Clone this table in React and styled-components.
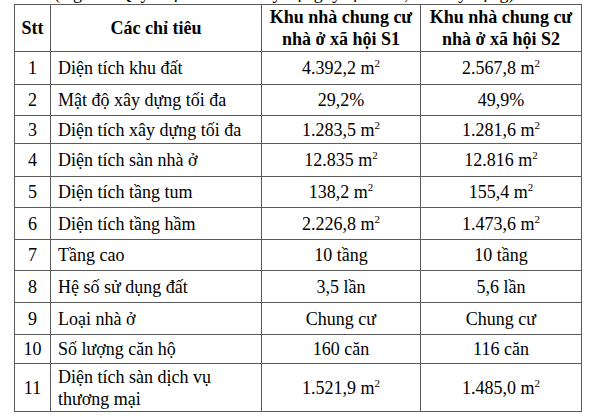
import React from "react";
import styled, { createGlobalStyle } from "styled-components";

const Global = createGlobalStyle`
  html, body { margin: 0; padding: 0; background: #fff; }
  body { font-family: "Liberation Serif", "Times New Roman", serif; color: #000; overflow: hidden; }
`;

const Page = styled.div`
  width: 591px;
  height: 415px;
  overflow: hidden;
  padding-left: 14px;
  box-sizing: border-box;
`;

const Caption = styled.p`
  margin: -17px 0 0 0;
  height: 21px;
  font-size: 18px;
  line-height: 20px;
  padding-left: 40px;
  white-space: nowrap;
`;

const Table = styled.table`
  border-collapse: collapse;
  table-layout: fixed;
  width: 568px;
  font-size: 18px;
`;

const Th = styled.th`
  border: 1px solid #5a5a5a;
  font-weight: bold;
  text-align: center;
  line-height: 22px;
  height: 46px;
  padding: 0 2px;
  vertical-align: middle;
`;

const Td = styled.td`
  border: 1px solid #5a5a5a;
  padding: 0 ${(p) => (p.$left ? "7px" : "2px")};
  text-align: ${(p) => (p.$left ? "left" : "center")};
  vertical-align: middle;
  line-height: 22px;
  white-space: nowrap;
`;

const Tr = styled.tr`
  height: ${(p) => p.$h}px;
`;

const Sup = styled.sup`
  font-size: 11px;
  vertical-align: 7px;
  line-height: 0;
`;

const Footer = styled.p`
  margin: 4px 0 0 0;
  font-size: 18px;
  line-height: 20px;
  padding-left: 60px;
  white-space: nowrap;
`;

const M2 = ({ v }) => (
  <>
    {v} m<Sup>2</Sup>
  </>
);

const rows = [
  ["1", "Diện tích khu đất", <M2 v="4.392,2" />, <M2 v="2.567,8" />, 33],
  ["2", "Mật độ xây dựng tối đa", "29,2%", "49,9%", 31],
  ["3", "Diện tích xây dựng tối đa", <M2 v="1.283,5" />, <M2 v="1.281,6" />, 28],
  ["4", "Diện tích sàn nhà ở", <M2 v="12.835" />, <M2 v="12.816" />, 33],
  ["5", "Diện tích tầng tum", <M2 v="138,2" />, <M2 v="155,4" />, 31],
  ["6", "Diện tích tầng hầm", <M2 v="2.226,8" />, <M2 v="1.473,6" />, 32],
  ["7", "Tầng cao", "10 tầng", "10 tầng", 31],
  ["8", "Hệ số sử dụng đất", "3,5 lần", "5,6 lần", 32],
  ["9", "Loại nhà ở", "Chung cư", "Chung cư", 32],
  ["10", "Số lượng căn hộ", "160 căn", "116 căn", 29],
  ["11", <>Diện tích sàn dịch vụ<br />thương mại</>, <M2 v="1.521,9" />, <M2 v="1.485,0" />, 48],
];

export default function App() {
  return (
    <Page>
      <Global />
      <Caption>(Nguồn: Quy hoạch chi tiết xây dựng tỷ lệ 1/500, Sở Xây dựng)</Caption>
      <Table>
        <colgroup>
          <col style={{ width: "36px" }} />
          <col style={{ width: "211px" }} />
          <col style={{ width: "159px" }} />
          <col style={{ width: "161px" }} />
        </colgroup>
        <thead>
          <tr>
            <Th>Stt</Th>
            <Th>Các chỉ tiêu</Th>
            <Th>Khu nhà chung cư<br />nhà ở xã hội S1</Th>
            <Th>Khu nhà chung cư<br />nhà ở xã hội S2</Th>
          </tr>
        </thead>
        <tbody>
          {rows.map(([n, label, a, b, h]) => (
            <Tr key={n} $h={h}>
              <Td>{n}</Td>
              <Td $left>{label}</Td>
              <Td>{a}</Td>
              <Td>{b}</Td>
            </Tr>
          ))}
        </tbody>
      </Table>
      <Footer>Cả hai khu đất đều đảm bảo đáp ứng đầy đủ các chỉ tiêu quy hoạch</Footer>
    </Page>
  );
}
